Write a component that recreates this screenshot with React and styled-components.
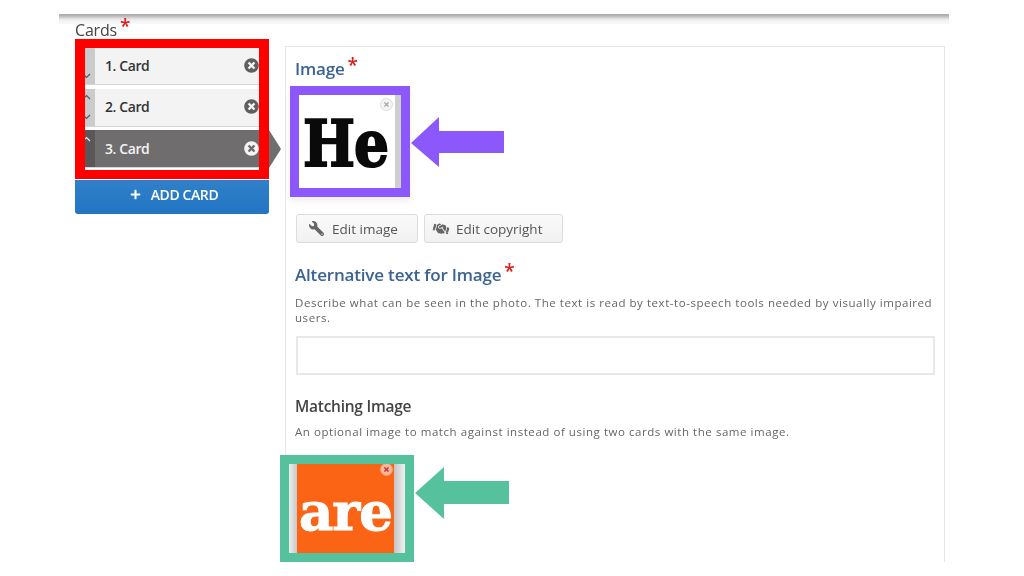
import React from 'react';
import styled, { createGlobalStyle } from 'styled-components';
import { FaPlus, FaWrench, FaHandshake, FaTimes, FaTimesCircle } from 'react-icons/fa';

const GlobalStyle = createGlobalStyle`
  html, body {
    margin: 0;
    background: #ffffff;
    font-family: 'Open Sans', 'Liberation Sans', sans-serif;
  }
`;

const Page = styled.div`
  width: 1024px;
  height: 562px;
  overflow: hidden;
  padding: 14px 75px 0 59px;
  box-sizing: border-box;
  filter: blur(0.35px);
`;

const TopBar = styled.div`
  height: 10px;
  background: linear-gradient(#a9a9a9 0, #b9b9b9 2px, #d8d8d8 4px, #f1f1f1 6px, #f8f8f8 10px);
`;

const Columns = styled.div`
  display: flex;
  gap: 16px;
  padding-left: 16px;
`;

const CardsColumn = styled.div`
  width: 194px;
  flex: none;
`;

const Required = styled.span`
  color: #e01b1b;
  font-size: 19px;
  font-weight: 600;
  line-height: 0;
  margin-left: 3px;
  vertical-align: 3px;
`;

const CardsLabel = styled.div`
  height: 15px;
  font-size: 16px;
  line-height: 13px;
  letter-spacing: -0.2px;
  color: #444;
`;

const CardList = styled.div`
  position: relative;
  height: 122px;
  border: 9px solid #ff0000;
  border-width: 9px 10px;
  background: #fff;
`;

const CardRow = styled.div`
  display: flex;
  height: ${({ $height }) => $height}px;
  margin-bottom: ${({ $gap }) => $gap}px;
  border-bottom: 1px solid #d6d6d6;
  box-sizing: border-box;
  background: ${({ $active }) => ($active ? '#706d6f' : '#f3f3f3')};
  color: ${({ $active }) => ($active ? '#f4f4f4' : '#333')};
`;

const Handle = styled.div`
  position: relative;
  width: 10px;
  flex: none;
  overflow: hidden;
  background: ${({ $active }) => ($active ? '#595758' : '#cbcbcb')};
`;

const Chevron = styled.svg`
  position: absolute;
  left: -3px;
  top: ${({ $top }) => $top}px;
  width: 9px;
  height: 6px;
  fill: none;
  stroke: ${({ $active }) => ($active ? '#eee' : '#555')};
  stroke-width: 1.2;
`;

const CardTitle = styled.div`
  flex: 1;
  display: flex;
  align-items: center;
  justify-content: space-between;
  padding: 0 0 ${({ $lift }) => $lift}px 10px;
  font-size: 14px;
  font-weight: 600;
  letter-spacing: -0.4px;
`;

const RemoveCard = styled(FaTimesCircle)`
  width: 15px;
  height: 15px;
  color: ${({ $active }) => ($active ? '#f4f4f4' : '#5f5f5f')};
`;

const Pointer = styled.div`
  position: absolute;
  left: 174px;
  top: 82px;
  width: 0;
  height: 0;
  margin-left: 10px;
  border-style: solid;
  border-width: 19px 0 19px 12px;
  border-color: transparent transparent transparent #716e70;
`;

const AddButton = styled.div`
  height: 34px;
  display: flex;
  align-items: center;
  justify-content: center;
  gap: 10px;
  margin-top: 1px;
  padding: 0 0 5px 4px;
  box-sizing: border-box;
  border-radius: 0 0 3px 3px;
  background: linear-gradient(#3080c9, #2175c3);
  color: #fff;
  font-size: 14px;
  font-weight: 600;
  letter-spacing: -0.4px;
  svg {
    width: 11px;
    height: 11px;
  }
`;

const Panel = styled.div`
  width: 660px;
  height: 516px;
  margin-top: 22px;
  padding: 10px 9px 0 9px;
  box-sizing: border-box;
  border: 1px solid #e6e6e6;
  border-bottom: none;
  flex: none;
`;

const BlueHeading = styled.div`
  font-size: 17px;
  line-height: 24px;
  font-weight: 600;
  letter-spacing: -0.18px;
  color: #3a6391;
`;

const ThumbRow = styled.div`
  display: flex;
  align-items: flex-start;
  gap: 1px;
  margin-left: ${({ $left }) => $left}px;
  margin-top: ${({ $top }) => $top}px;
`;

const ThumbFrame = styled.div`
  position: relative;
  display: flex;
  width: ${({ $width }) => $width}px;
  height: ${({ $height }) => $height}px;
  border: 9px solid ${({ $color }) => $color};
  box-shadow: ${({ $shadow }) => ($shadow ? '0 4px 6px rgba(0, 0, 0, 0.07)' : 'none')};
  flex: none;
  overflow: hidden;
  background: #fff;
`;

const Strip = styled.div`
  width: ${({ $width }) => $width}px;
  flex: none;
  background: ${({ $fill }) => $fill};
`;

const ImageWord = styled.div`
  flex: 1;
  display: flex;
  align-items: center;
  justify-content: center;
  overflow: hidden;
  background: ${({ $bg }) => $bg};
  color: ${({ $fg }) => $fg};
  font-family: 'DejaVu Serif', 'Liberation Serif', serif;
  font-weight: 700;
  font-size: ${({ $size }) => $size}px;
  padding: ${({ $pad }) => $pad};
  span {
    display: inline-block;
    letter-spacing: -1px;
    transform: scaleX(${({ $squeeze }) => $squeeze});
    -webkit-text-stroke: ${({ $stroke }) => $stroke}px ${({ $fg }) => $fg};
  }
`;

const ThumbClose = styled.div`
  position: absolute;
  right: ${({ $right }) => $right}px;
  top: ${({ $top }) => $top}px;
  width: 13px;
  height: 13px;
  box-sizing: border-box;
  border-radius: 50%;
  display: flex;
  align-items: center;
  justify-content: center;
  background: ${({ $bg }) => $bg};
  border: 1px solid ${({ $line }) => $line};
  color: ${({ $x }) => $x};
  svg {
    width: 7px;
    height: 7px;
  }
`;

const Arrow = styled.svg`
  width: ${({ width }) => width}px;
  height: ${({ height }) => height}px;
  margin-top: ${({ $top }) => $top}px;
  flex: none;
`;

const ButtonRow = styled.div`
  display: flex;
  gap: 6px;
  margin-top: 17px;
  margin-left: 1px;
`;

const EditButton = styled.div`
  display: flex;
  align-items: center;
  gap: ${({ $gap }) => $gap}px;
  width: ${({ $width }) => $width}px;
  height: 29px;
  box-sizing: border-box;
  padding-left: ${({ $pad }) => $pad}px;
  border: 1px solid #dcdcdc;
  border-radius: 3px;
  background: linear-gradient(#fafafa, #f1f1f1);
  color: #555;
  font-size: 13.5px;
  svg {
    width: ${({ $icon }) => $icon}px;
    height: ${({ $icon }) => $icon}px;
    color: #666;
    transform: ${({ $turn }) => $turn};
  }
`;

const AltHeading = styled(BlueHeading)`
  margin-top: 20px;
`;

const Help = styled.div`
  margin-top: ${({ $top }) => $top}px;
  width: 640px;
  font-size: 11.5px;
  line-height: 15px;
  letter-spacing: 0.55px;
  color: #666;
`;

const TextInput = styled.div`
  height: 39px;
  width: 639px;
  margin: 11px 0 0 1px;
  box-sizing: border-box;
  border: 2px solid #e8e8e8;
  background: #fff;
`;

const DarkHeading = styled.div`
  margin-top: 19px;
  font-size: 15.5px;
  line-height: 24px;
  font-weight: 600;
  letter-spacing: -0.25px;
  color: #444;
`;

function DownChevron({ top, active }) {
  return (
    <Chevron $top={top} $active={active} viewBox="0 0 9 6">
      <path d="M1 1l3.5 3.5L8 1" />
    </Chevron>
  );
}

function UpChevron({ top, active }) {
  return (
    <Chevron $top={top} $active={active} viewBox="0 0 9 6">
      <path d="M1 5l3.5-3.5L8 5" />
    </Chevron>
  );
}

function Card({ label, height, gap, lift, active, up, down }) {
  return (
    <CardRow $height={height} $gap={gap} $active={active}>
      <Handle $active={active}>
        {up !== undefined && <UpChevron top={up} active={active} />}
        {down !== undefined && <DownChevron top={down} active={active} />}
      </Handle>
      <CardTitle $lift={lift}>
        {label}
        <RemoveCard $active={active} />
      </CardTitle>
    </CardRow>
  );
}

export default function App() {
  return (
    <Page>
      <GlobalStyle />
      <TopBar />
      <Columns>
        <CardsColumn>
          <CardsLabel>
            Cards<Required>*</Required>
          </CardsLabel>
          <CardList>
            <Card label="1. Card" height={37} gap={4} lift={1} down={25} />
            <Card label="2. Card" height={38} gap={3} lift={2} up={5} down={25} />
            <Card label="3. Card" height={38} gap={0} lift={0} active up={6} />
            <Pointer />
          </CardList>
          <AddButton>
            <FaPlus />
            ADD CARD
          </AddButton>
        </CardsColumn>
        <Panel>
          <BlueHeading>
            Image<Required>*</Required>
          </BlueHeading>
          <ThumbRow $left={-5} $top={5}>
            <ThumbFrame $width={102} $height={93} $color="#8c57fb" $shadow>
              <ImageWord $bg="#fff" $fg="#0a0a0a" $size={64} $squeeze={0.86} $stroke={2} $pad="3px 3px 0 0">
                <span>He</span>
              </ImageWord>
              <Strip $width={6} $fill="#cfcfcf" />
              <ThumbClose $right={8} $top={3} $bg="#f4f4f4" $line="#ddd" $x="#aaa">
                <FaTimes />
              </ThumbClose>
            </ThumbFrame>
            <Arrow width="93" height="50" viewBox="0 0 93 50" $top={31}>
              <path d="M0 26L28 0v14h65v22H28v14z" fill="#8c57fb" />
            </Arrow>
          </ThumbRow>
          <ButtonRow>
            <EditButton $width={122} $pad={12} $gap={8} $icon={15} $turn="scaleX(-1)">
              <FaWrench />
              Edit image
            </EditButton>
            <EditButton $width={139} $pad={8} $gap={7} $icon={16} $turn="rotate(15deg)">
              <FaHandshake />
              Edit copyright
            </EditButton>
          </ButtonRow>
          <AltHeading>
            Alternative text for Image<Required>*</Required>
          </AltHeading>
          <Help $top={8}>
            Describe what can be seen in the photo. The text is read by text-to-speech tools needed by visually impaired users.
          </Help>
          <TextInput />
          <DarkHeading>Matching Image</DarkHeading>
          <Help $top={6}>An optional image to match against instead of using two cards with the same image.</Help>
          <ThumbRow $left={-15} $top={16}>
            <ThumbFrame $width={116} $height={89} $color="#55c19d">
              <Strip $width={8} $fill="linear-gradient(90deg, #eee, #c8c8c8)" />
              <ImageWord $bg="#fb6414" $fg="#fff" $size={53} $squeeze={1} $stroke={1} $pad="5px 0 0 0">
                <span>are</span>
              </ImageWord>
              <Strip $width={11} $fill="linear-gradient(90deg, #c4c4c4, #f0f0f0)" />
              <ThumbClose $right={12} $top={-1} $bg="#f6b79a" $line="#ef9d78" $x="#c9302c">
                <FaTimes />
              </ThumbClose>
            </ThumbFrame>
            <Arrow width="94" height="52" viewBox="0 0 94 52" $top={12}>
              <path d="M0 26L29 0v14h65v23H29v15z" fill="#55c19d" />
            </Arrow>
          </ThumbRow>
        </Panel>
      </Columns>
    </Page>
  );
}
